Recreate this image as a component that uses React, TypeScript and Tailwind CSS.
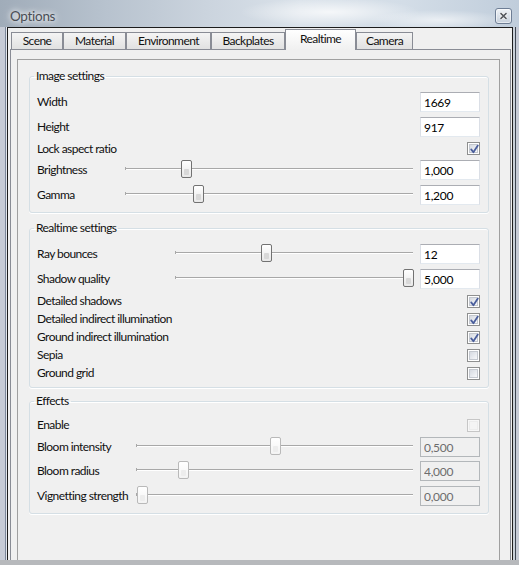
import React from "react";

const tabs = [
  { name: "Scene", w: "w-[52px]" },
  { name: "Material", w: "w-[63px]" },
  { name: "Environment", w: "w-[85px]" },
  { name: "Backplates", w: "w-[74px]" },
  { name: "Realtime", w: "w-[71px]", active: true },
  { name: "Camera", w: "w-[57px]" },
];

function Check({ checked, disabled }: { checked?: boolean; disabled?: boolean }) {
  return (
    <div
      className={`relative h-[13px] w-[13px] shrink-0 border p-[1px] ${
        disabled ? "border-[#c6c6c6] bg-[#f7f7f7]" : "border-[#8e8f8f] bg-white"
      }`}
    >
      <div
        className={`h-full w-full border ${
          disabled
            ? "border-[#ececec] bg-[#f4f4f4]"
            : "border-[#c4c8cf] bg-gradient-to-br from-[#d6dae1] to-[#f7f8fa]"
        }`}
      />
      {checked && (
        <svg className="absolute inset-0" width="13" height="13" viewBox="0 0 13 13">
          <polyline
            points="3.2,6.4 5.4,9.2 9.8,2.6"
            fill="none"
            stroke="#4a5e9c"
            strokeWidth="1.8"
            strokeLinecap="round"
            strokeLinejoin="round"
          />
        </svg>
      )}
    </div>
  );
}

function Field({ value, disabled, slider }: { value: string; disabled?: boolean; slider?: boolean }) {
  return (
    <input
      readOnly
      value={value}
      className={`h-5 w-[60px] shrink-0 border px-[3px] text-[12px] leading-[16px] tracking-[-0.3px] outline-none ${
        slider ? "ml-[7px]" : "ml-auto"
      } ${
        disabled
          ? "border-[#b3b7ba] bg-[#f0f0f0] text-[#6d6d6d]"
          : "border-[#e3e9ef] border-x-[#dbdfe6] border-t-[#abadb3] bg-white text-black"
      }`}
    />
  );
}

function Slider({ left, disabled }: { left: string; disabled?: boolean }) {
  return (
    <div className="relative h-5 min-w-0 flex-1">
      <div className="absolute left-0 right-0 top-[8px] h-[2px] border-t border-[#a8a8a8] bg-white" />
      <div className="absolute left-0 top-[7px] h-[3px] w-px bg-[#a8a8a8]" />
      <div
        className={`absolute top-0 flex h-[18px] w-[11px] flex-col rounded-[2px] border px-[2px] pb-[2px] pt-[8px] ${left} ${
          disabled
            ? "border-[#b9b9b9] bg-gradient-to-b from-white to-[#f3f3f3]"
            : "border-[#727272] bg-gradient-to-b from-white to-[#e8e8e8]"
        }`}
      >
        <div className={`flex-1 rounded-[1px] ${disabled ? "bg-[#ededed]" : "bg-[#d8d8d8]"}`} />
      </div>
    </div>
  );
}

function SliderRow({
  label,
  lw,
  left,
  value,
  disabled,
  className = "",
}: {
  label: string;
  lw: string;
  left: string;
  value: string;
  disabled?: boolean;
  className?: string;
}) {
  return (
    <div className={`flex h-5 items-center ${className}`}>
      <span className={`shrink-0 whitespace-nowrap ${lw}`}>{label}</span>
      <Slider left={left} disabled={disabled} />
      <Field value={value} disabled={disabled} slider />
    </div>
  );
}

function CheckRow({ label, checked, disabled, className = "h-[18px]" }: { label: string; checked?: boolean; disabled?: boolean; className?: string }) {
  return (
    <div className={`flex items-center justify-between ${className}`}>
      <span className="whitespace-nowrap">{label}</span>
      <Check checked={checked} disabled={disabled} />
    </div>
  );
}

function Group({ title, className, children }: { title: string; className: string; children: React.ReactNode }) {
  return (
    <fieldset
      className={`flex flex-col rounded-[3px] border border-[#d5dfe5] pl-[7px] pr-[8px] shadow-[0_1px_0_#fff,inset_0_1px_0_#fff] ${className}`}
    >
      <legend className="-ml-[3px] px-[2px] leading-[16px]">{title}</legend>
      {children}
    </fieldset>
  );
}

export default function App() {
  return (
    <div className="flex h-[565px] w-[519px] flex-col overflow-hidden bg-[#c4cad4] font-['Lato','Liberation_Sans',sans-serif] text-[12px] leading-[16px] tracking-[-0.55px] text-[#111]">
      {/* title bar */}
      <div className="flex h-[27px] shrink-0 items-center justify-between bg-[image:radial-gradient(ellipse_90px_14px_at_330px_12px,rgba(255,255,255,0.75),transparent),radial-gradient(ellipse_70px_10px_at_440px_20px,rgba(255,255,255,0.6),transparent),linear-gradient(90deg,#a0acb9_0%,#b7c2ce_20%,#cbd4de_40%,#dae2ea_58%,#d3dde7_78%,#c0cddb_100%)] pl-[10px] pr-[7px] pt-[4px]">
        <span className="text-[13.5px] leading-[18px] tracking-[-0.3px] text-[#4a4e55] [text-shadow:0_0_5px_#fff,0_0_8px_#fff]">Options</span>
        <div className="flex h-[16px] w-[17px] items-center justify-center rounded-[3px] border border-[#6e7e95] bg-gradient-to-b from-[#f0f3f7] to-[#c6d0dc] shadow-[inset_0_0_0_1px_rgba(255,255,255,0.55)]">
          <svg width="9" height="8" viewBox="0 0 9 8">
            <path d="M1.5 1.2 7.5 6.8 M7.5 1.2 1.5 6.8" stroke="#ffffff" strokeWidth="3.2" />
            <path d="M1.5 1.2 7.5 6.8 M7.5 1.2 1.5 6.8" stroke="#555a60" strokeWidth="1.6" />
          </svg>
        </div>
      </div>

      <div className="flex min-h-0 flex-1">
        <div className="flex w-[7px] shrink-0">
          <div className="w-[5px] bg-[#c6cbd6]" />
          <div className="w-px bg-[#7c879a]" />
          <div className="w-px bg-[#e2e6ec]" />
        </div>

        {/* client */}
        <div className="flex min-w-0 flex-1 border-x border-t border-[#1c1c1c] bg-[#f0f0f0] pl-[2px] pr-[1px]">
          <div className="flex min-w-0 flex-1 flex-col">
            <div className="flex h-[21px] shrink-0 items-end pl-[1px]">
              {tabs.map((t) =>
                t.active ? (
                  <div
                    key={t.name}
                    className={`relative z-10 -mb-px flex h-[21px] items-center justify-center border-x border-t border-[#898c95] bg-gradient-to-b from-white to-[#f0f0f0] pb-[3px] ${t.w}`}
                  >
                    {t.name}
                  </div>
                ) : (
                  <div
                    key={t.name}
                    className={`flex h-[17px] items-center justify-center border-x border-t border-[#898c95] bg-gradient-to-b from-[#f4f4f4] to-[#e1e1e1] ${t.w}`}
                  >
                    {t.name}
                  </div>
                )
              )}
            </div>

            <div className="flex min-h-0 flex-1 flex-col border-x border-t border-[#898c95] bg-[#f0f0f0] pl-[6px] pr-[10px] pt-[9px]">
              <div className="flex-1 border-x border-t border-[#a0a0a0] pl-[11px] pr-[10px] pt-[8px]">
                <Group title="Image settings" className="pb-[7px] pt-[8px]">
                  <div className="flex h-5 items-center">
                    <span>Width</span>
                    <Field value="1669" />
                  </div>
                  <div className="mt-[5px] flex h-5 items-center">
                    <span>Height</span>
                    <Field value="917" />
                  </div>
                  <CheckRow label="Lock aspect ratio" checked className="h-[23px]" />
                  <SliderRow label="Brightness" lw="w-[88px]" left="left-[56px]" value="1,000" />
                  <SliderRow label="Gamma" lw="w-[88px]" left="left-[68px]" value="1,200" className="mt-[5px]" />
                </Group>

                <Group title="Realtime settings" className="mt-[7px] pb-[5px] pt-[8px]">
                  <SliderRow label="Ray bounces" lw="w-[138px]" left="left-[86px]" value="12" />
                  <SliderRow label="Shadow quality" lw="w-[138px]" left="left-[228px]" value="5,000" className="mt-[5px]" />
                  <div className="mt-[3px] flex flex-col">
                    <CheckRow label="Detailed shadows" checked />
                    <CheckRow label="Detailed indirect illumination" checked />
                    <CheckRow label="Ground indirect illumination" checked />
                    <CheckRow label="Sepia" />
                    <CheckRow label="Ground grid" />
                  </div>
                </Group>

                <Group title="Effects" className="mt-[5px] pb-[7px] pt-[7px]">
                  <CheckRow label="Enable" disabled />
                  <SliderRow label="Bloom intensity" lw="w-[99px]" left="left-[134px]" value="0,500" disabled className="mt-[3px]" />
                  <SliderRow label="Bloom radius" lw="w-[99px]" left="left-[42px]" value="4,000" disabled className="mt-[4px]" />
                  <SliderRow label="Vignetting strength" lw="w-[99px]" left="left-[1px]" value="0,000" disabled className="mt-[5px]" />
                </Group>
              </div>
            </div>
          </div>
        </div>

        <div className="flex w-[6px] shrink-0">
          <div className="w-[2px] bg-[#c9d0d9]" />
          <div className="w-px bg-[#3d4552]" />
          <div className="w-[3px] bg-[#c6cbd6]" />
        </div>
      </div>
      <div className="h-[5px] shrink-0 bg-[#b7b9bc]" />
    </div>
  );
}
